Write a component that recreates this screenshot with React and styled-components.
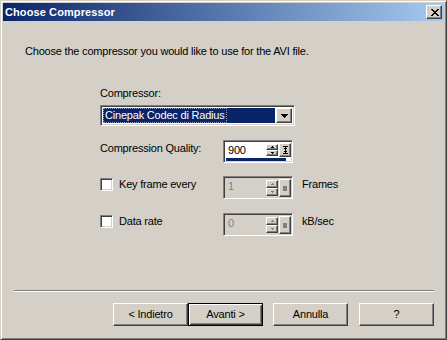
import React from 'react';
import styled, { createGlobalStyle, css } from 'styled-components';

const GlobalStyle = createGlobalStyle`
  html, body {
    margin: 0;
    padding: 0;
    background: #d4d0c8;
  }
  body {
    font-family: "Liberation Sans", Arial, sans-serif;
    font-size: 11px;
    letter-spacing: -0.2px;
    color: #000;
  }
`;

const sunken = css`
  border: 1px solid;
  border-color: #808080 #fff #fff #808080;
  box-shadow: inset 1px 1px #404040, inset -1px -1px #d4d0c8;
`;

const raised = css`
  border: 1px solid;
  border-color: #fff #404040 #404040 #fff;
  box-shadow: inset -1px -1px #808080, inset 1px 1px #d4d0c8;
`;

// pixel glyph helper, rows of [x, width]
function Pixels({ rows, w, h, color = '#000' }) {
  return (
    <svg width={w} height={h} viewBox={`0 0 ${w} ${h}`} shapeRendering="crispEdges">
      {rows.map((row, y) =>
        row.map(([x, len], i) => <rect key={y + '-' + i} x={x} y={y} width={len} height={1} fill={color} />)
      )}
    </svg>
  );
}

const closeRows = [
  [[0, 2], [6, 2]],
  [[1, 2], [5, 2]],
  [[2, 4]],
  [[3, 2]],
  [[2, 4]],
  [[1, 2], [5, 2]],
  [[0, 2], [6, 2]],
];

const downRows = [[[0, 7]], [[1, 5]], [[2, 3]], [[3, 1]]];
const smallUp = [[[1, 1]], [[0, 3]]];
const smallDown = [[[0, 3]], [[1, 1]]];
const quickRows = [[[0, 5]], [[2, 1]], [[1, 3]], [[2, 1]], [[2, 1]], [[1, 3]], [[2, 1]], [[0, 5]]];

export default function App() {
  return (
    <>
      <GlobalStyle />
      <Window>
        <TitleBar>
          <Title>Choose Compressor</Title>
          <CloseButton>
            <Pixels rows={closeRows} w={8} h={7} />
          </CloseButton>
        </TitleBar>

        <Body>
          <Intro>Choose the compressor you would like to use for the AVI file.</Intro>

          <Form>
            <Label>Compressor:</Label>
            <Combo>
              <ComboValue>
                <Focus>Cinepak Codec di Radius</Focus>
              </ComboValue>
              <ComboButton>
                <Pixels rows={downRows} w={7} h={4} />
              </ComboButton>
            </Combo>

            <Row $top={14}>
              <LabelCell>
                <Label $offset>Compression Quality:</Label>
              </LabelCell>
              <Spinner value="900" bar />
            </Row>

            <Row $top={13}>
              <LabelCell>
                <Checkbox />
                <Label $offset>Key frame every</Label>
              </LabelCell>
              <Spinner value="1" disabled />
              <Unit>Frames</Unit>
            </Row>

            <Row $top={14}>
              <LabelCell>
                <Checkbox />
                <Label $offset>Data rate</Label>
              </LabelCell>
              <Spinner value="0" disabled />
              <Unit>kB/sec</Unit>
            </Row>
          </Form>

          <Separator />

          <ButtonRow>
            <Button>&lt; Indietro</Button>
            <Button $default>Avanti &gt;</Button>
            <Button $gap={10}>Annulla</Button>
            <Button $gap={11}>?</Button>
          </ButtonRow>
        </Body>
      </Window>
    </>
  );
}

function Spinner({ value, disabled, bar }) {
  const arrow = disabled ? '#808080' : '#000';
  return (
    <SpinFrame $disabled={disabled}>
      <SpinMain>
        <SpinText $disabled={disabled}>{value}</SpinText>
        <SpinArrows>
          <SpinArrow>
            <Pixels rows={smallUp} w={3} h={2} color={arrow} />
          </SpinArrow>
          <SpinArrow>
            <Pixels rows={smallDown} w={3} h={2} color={arrow} />
          </SpinArrow>
        </SpinArrows>
        <QuickButton>
          {disabled ? <GraySquare /> : <Pixels rows={quickRows} w={5} h={8} />}
        </QuickButton>
      </SpinMain>
      {bar && <SpinBar />}
    </SpinFrame>
  );
}

const Window = styled.div`
  width: 447px;
  height: 340px;
  box-sizing: border-box;
  display: flex;
  flex-direction: column;
  padding: 2px;
  background: #d4d0c8;
  border: 1px solid;
  border-color: #d4d0c8 #404040 #404040 #d4d0c8;
  box-shadow: inset 1px 1px #fff, inset -1px -1px #808080;
`;

const TitleBar = styled.div`
  height: 18px;
  display: flex;
  align-items: center;
  justify-content: space-between;
  padding: 0 2px 0 2px;
  background: linear-gradient(to right, #0a246a, #a6caf0);
`;

const Title = styled.span`
  color: #fff;
  font-weight: bold;
  font-size: 11px;
  letter-spacing: 0.1px;
  line-height: 13px;
  padding-top: 1px;
`;

const CloseButton = styled.div`
  ${raised};
  box-sizing: border-box;
  width: 16px;
  height: 14px;
  display: flex;
  align-items: center;
  justify-content: center;
  background: #d4d0c8;
  padding-left: 1px;
`;

const Body = styled.div`
  flex: 1;
  display: flex;
  flex-direction: column;
`;

const Intro = styled.div`
  margin: 24px 0 0 22px;
  line-height: 13px;
`;

const Form = styled.div`
  margin: 29px 0 0 97px;
  display: flex;
  flex-direction: column;
  align-items: flex-start;
`;

const Label = styled.span`
  line-height: 13px;
  white-space: nowrap;
  ${(p) => p.$offset && 'margin-top: 2px;'}
`;

const Combo = styled.div`
  ${sunken};
  box-sizing: border-box;
  margin-top: 5px;
  width: 195px;
  height: 21px;
  padding: 2px;
  display: flex;
  background: #fff;
`;

const ComboValue = styled.div`
  flex: 1;
  margin-right: 1px;
  background: #0a246a;
  color: #fff;
  display: flex;
  align-items: center;
  padding-left: 1px;
`;

const Focus = styled.span`
  line-height: 13px;
  padding: 0 1px;
  outline: 1px dotted #8c9cc4;
`;

const ComboButton = styled.div`
  ${raised};
  box-sizing: border-box;
  width: 16px;
  display: flex;
  align-items: center;
  justify-content: center;
  background: #d4d0c8;
`;

const Row = styled.div`
  margin-top: ${(p) => p.$top}px;
  height: 23px;
  display: flex;
  align-items: flex-start;
`;

const LabelCell = styled.div`
  width: 123px;
  display: flex;
  align-items: flex-start;
`;

const Checkbox = styled.div`
  ${sunken};
  box-sizing: border-box;
  width: 13px;
  height: 13px;
  margin: 2px 6px 0 0;
  background: #fff;
`;

const Unit = styled.span`
  margin: 2px 0 0 9px;
  line-height: 13px;
`;

const SpinFrame = styled.div`
  ${sunken};
  box-sizing: border-box;
  width: 70px;
  height: 23px;
  padding: 2px 1px 1px 2px;
  display: flex;
  flex-direction: column;
  background: ${(p) => (p.$disabled ? '#d4d0c8' : '#fff')};
`;

const SpinMain = styled.div`
  flex: 1;
  display: flex;
  min-height: 0;
`;

const SpinText = styled.span`
  flex: 1;
  padding: 1px 0 0 2px;
  line-height: 13px;
  color: ${(p) => (p.$disabled ? '#808080' : '#000')};
`;

const SpinArrows = styled.div`
  width: 12px;
  display: flex;
  flex-direction: column;
  padding: 1px 0;
`;

const SpinArrow = styled.div`
  ${raised};
  box-sizing: border-box;
  flex: 1;
  display: flex;
  align-items: center;
  justify-content: center;
  background: #d4d0c8;
`;

const QuickButton = styled.div`
  ${raised};
  box-sizing: border-box;
  width: 12px;
  margin-left: 1px;
  display: flex;
  align-items: center;
  justify-content: center;
  background: #d4d0c8;
`;

const GraySquare = styled.div`
  width: 4px;
  height: 5px;
  background: #808080;
`;

const SpinBar = styled.div`
  height: 3px;
  margin: 1px 5px 0 0;
  background: #0a246a;
`;

const Separator = styled.div`
  margin: 54px 0 0 11px;
  width: 420px;
  height: 1px;
  background: #808080;
  border-bottom: 1px solid #fff;
`;

const ButtonRow = styled.div`
  margin: 11px 0 0 110px;
  display: flex;
`;

const Button = styled.div`
  box-sizing: border-box;
  width: 75px;
  height: 23px;
  margin-left: ${(p) => p.$gap || 0}px;
  display: flex;
  align-items: center;
  justify-content: center;
  background: #d4d0c8;
  line-height: 13px;
  ${(p) =>
    p.$default
      ? css`
          border: 1px solid #000;
          box-shadow: inset 1px 1px #fff, inset -1px -1px #404040, inset 2px 2px #d4d0c8,
            inset -2px -2px #808080;
        `
      : raised};
`;
